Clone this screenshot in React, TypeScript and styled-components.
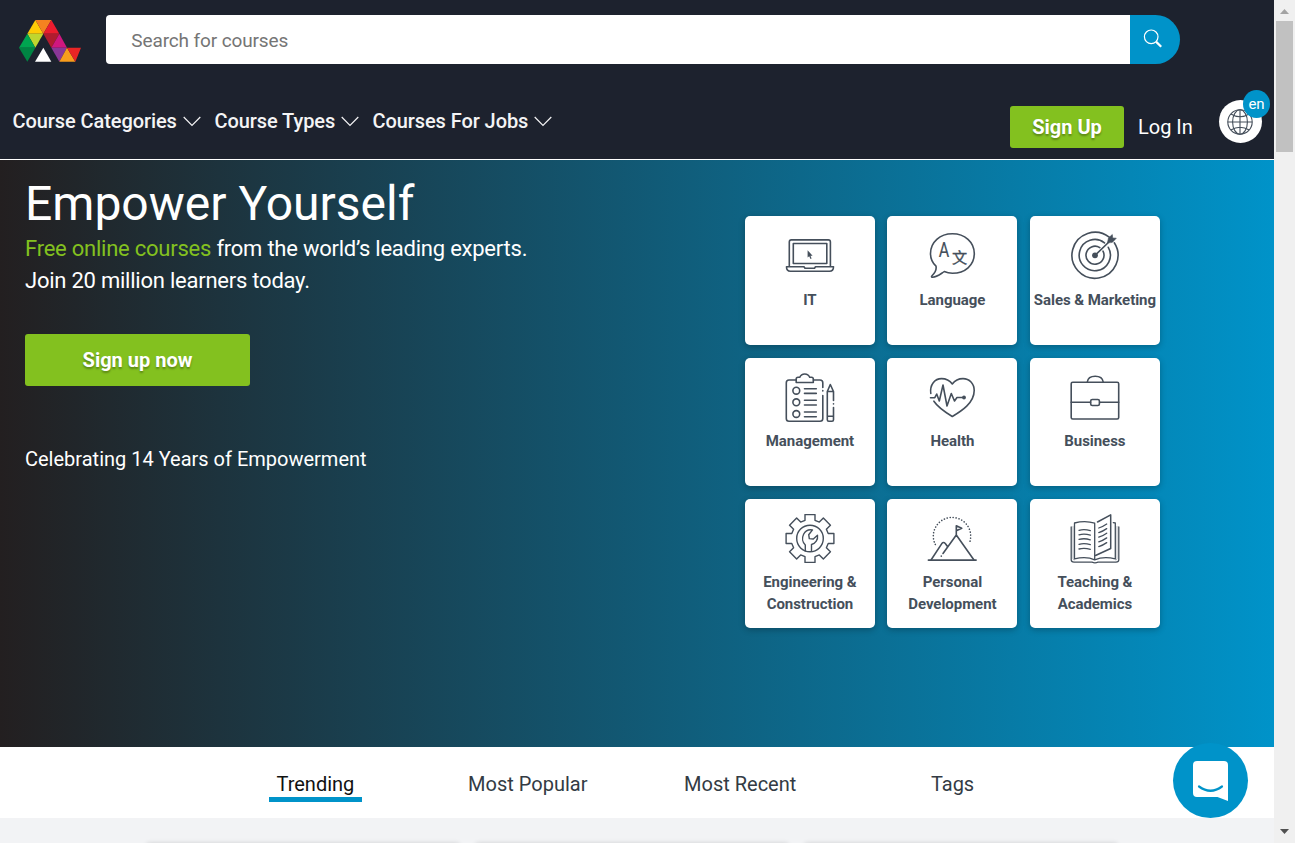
import React from "react";
import styled, { createGlobalStyle } from "styled-components";

const GlobalStyle = createGlobalStyle`
  * { box-sizing: border-box; }
  html, body { margin: 0; height: 100%; overflow: hidden; }
  body { font-family: Roboto, "Liberation Sans", sans-serif; background: #fff; }
  button, input { font-family: inherit; border: 0; padding: 0; margin: 0; }
  a { color: inherit; text-decoration: none; }
  h1, p { margin: 0; font-weight: 400; }
`;

const Window = styled.div`
  display: grid;
  grid-template-columns: 1274px 21px;
  width: 1295px;
  height: 843px;
  overflow: hidden;
`;

const Page = styled.div`
  position: relative;
  height: 843px;
  overflow: hidden;
  background: #f2f3f5;
`;

/* Header */

const Header = styled.header`
  height: 160px;
  background: #1d222e;
  border-bottom: 1px solid #fff;
`;

const SearchRow = styled.div`
  display: flex;
  align-items: flex-start;
  height: 90px;
  padding: 15px 0 0 19px;
`;

const LogoLink = styled.a`
  display: block;
  width: 87px;
  padding-top: 5px;
  svg { display: block; }
`;

const SearchForm = styled.form`
  display: flex;
  width: 1074px;
  height: 49px;
`;

const SearchInput = styled.input`
  flex: 1;
  min-width: 0;
  padding: 2px 25px 0 25.3px;
  border-radius: 4px 0 0 4px;
  background: #fff;
  font-size: 19px;
  letter-spacing: -0.12px;
  color: #333;
  outline: 0;
  &::placeholder { color: #757575; opacity: 1; }
`;

const SearchButton = styled.button`
  display: flex;
  justify-content: flex-start;
  padding: 14px 0 0 13px;
  width: 50px;
  border-radius: 0 25px 25px 0;
  background: #0093c9;
`;

const NavRow = styled.div`
  display: flex;
  justify-content: space-between;
  height: 69px;
  padding: 0 12px 0 12.5px;
`;

const Menu = styled.nav`
  display: flex;
  height: 62px;
  align-items: center;
`;

const MenuItem = styled.a<{ $w: number }>`
  display: flex;
  align-items: center;
  width: ${(p) => p.$w}px;
  font-size: 20px;
  font-weight: 500;
  letter-spacing: -0.08px;
  color: #f4f4f5;
  white-space: nowrap;
  svg { margin: 1px 0 0 6.2px; flex: none; }
`;

const Account = styled.div`
  display: flex;
  align-items: flex-start;
`;

const GreenButton = styled.button<{ $w: number; $h: number }>`
  width: ${(p) => p.$w}px;
  height: ${(p) => p.$h}px;
  border-radius: 3px;
  background: #83c11f;
  color: #fff;
  font-size: 20px;
  font-weight: 700;
  text-shadow: 0 2px 2px rgba(0, 0, 0, 0.3);
`;

const SignUp = styled(GreenButton)`
  margin-top: 16px;
`;

const LogIn = styled.a`
  margin: 16px 0 0 14px;
  width: 81px;
  line-height: 42px;
  font-size: 20px;
  color: #fff;
`;

const Language = styled.div`
  position: relative;
  display: flex;
  align-items: center;
  justify-content: center;
  width: 43px;
  height: 43px;
  margin: 10px 0 0;
  border-radius: 50%;
  background: #fff;
  svg { margin-right: 1px; }
`;

const LanguageCode = styled.span`
  position: absolute;
  top: -10px;
  left: 24px;
  width: 27px;
  height: 28px;
  border-radius: 50%;
  background: #0093c9;
  color: #fff;
  font-size: 15px;
  line-height: 28px;
  text-align: center;
`;

/* Hero */

const Hero = styled.section`
  display: flex;
  justify-content: space-between;
  height: 587px;
  padding: 0 114.1px 0 25px;
  background: linear-gradient(90deg, #231f20 0%, #0093c9 100%);
`;

const Pitch = styled.div`
  padding-top: 15px;
  color: #fff;
`;

const Title = styled.h1`
  font-size: 48px;
  line-height: 58px;
`;

const Lead = styled.p`
  font-size: 22px;
  line-height: 32px;
  letter-spacing: -0.235px;
  white-space: nowrap;
`;

const Accent = styled.span`
  color: #83c11f;
`;

const SignUpNow = styled(GreenButton)`
  display: block;
  margin-top: 37px;
`;

const Celebrate = styled.p`
  margin-top: 61px;
  font-size: 20px;
  line-height: 24px;
`;

const Categories = styled.div`
  display: grid;
  grid-template-columns: repeat(3, 130px);
  grid-auto-rows: 128.85px;
  gap: 12.4px 12.5px;
  height: max-content;
  margin-top: 56.4px;
`;

const Card = styled.a`
  display: flex;
  flex-direction: column;
  align-items: center;
  padding-top: 15px;
  border-radius: 5px;
  background: #fff;
  box-shadow: 0 2px 6px rgba(0, 0, 0, 0.25);
  svg { display: block; flex: none; }
`;

const CardLabel = styled.span`
  margin-top: 7.2px;
  width: 128px;
  font-size: 15px;
  font-weight: 700;
  letter-spacing: -0.05px;
  line-height: 22px;
  color: #454f5b;
  text-align: center;
  white-space: pre-line;
`;

/* Tabs */

const Tabs = styled.nav`
  display: grid;
  grid-template-columns: repeat(4, 212.4px);
  justify-items: center;
  align-items: start;
  height: 71px;
  padding: 22px 0 0 209.2px;
  background: #fff;
`;

const Tab = styled.a<{ $active?: boolean }>`
  padding: 0 7.7px;
  height: 33px;
  line-height: 30px;
  font-size: 20px;
  color: ${(p) => (p.$active ? "#111" : "#333b44")};
  border-bottom: 5px solid ${(p) => (p.$active ? "#0093c9" : "transparent")};
`;

const Courses = styled.div`
  display: grid;
  grid-template-columns: repeat(3, 314px);
  gap: 15px;
  padding: 25px 0 0 146px;
`;

const Course = styled.article`
  height: 200px;
  border-radius: 4px;
  background: #fff;
  box-shadow: 0 0 5px rgba(0, 0, 0, 0.14);
`;

const Chat = styled.button`
  position: absolute;
  left: 1173px;
  top: 743px;
  width: 75px;
  height: 75px;
  border-radius: 50%;
  background: #0093c9;
  svg { display: block; margin: 0 auto; }
`;

/* Scrollbar */

const Scrollbar = styled.div`
  display: flex;
  flex-direction: column;
  align-items: center;
  justify-content: space-between;
  background: #f0f0f0;
`;

const Thumb = styled.div`
  width: 17px;
  height: 131px;
  margin-bottom: auto;
  background: #c1c1c1;
`;

const Arrow = styled.div<{ $down?: boolean }>`
  display: flex;
  align-items: center;
  justify-content: center;
  height: 21px;
  padding-top: 2px;
  color: ${(p) => (p.$down ? "#505050" : "#a3a3a3")};
  transform: ${(p) => (p.$down ? "rotate(180deg)" : "none")};
`;

const logoTriangles: [string, string][] = [
  ["106,60 82,101 130,101", "#ffcb05"],
  ["106,60 154,60 130,101", "#f58220"],
  ["154,60 130,101 178,101", "#ec1c2e"],
  ["82,101 130,101 106,143", "#bfd62f"],
  ["82,101 57,143 106,143", "#00a550"],
  ["57,143 106,143 82,185", "#008443"],
  ["130,101 178,101 154,143", "#b01c2e"],
  ["178,101 154,143 201,143", "#d0177f"],
  ["154,143 201,143 178,185", "#8a3797"],
  ["201,143 178,185 226,185", "#f99d1c"],
  ["201,143 243,143 226,185", "#e92525"],
  ["130,143 105,185 154,185", "#ffffff"],
];

const Logo = () => (
  <svg width="62" height="42" viewBox="57 60 186 126">
    {logoTriangles.map(([points, fill]) => (
      <polygon key={points} points={points} fill={fill} />
    ))}
  </svg>
);

const Chevron = () => (
  <svg width="18" height="11" viewBox="0 0 18 11" fill="none" stroke="#f4f4f5" strokeWidth="1.2">
    <path d="M.7 1L9 9.3L17.3 1" />
  </svg>
);

const SearchIcon = () => (
  <svg width="21" height="21" viewBox="0 0 21 21" fill="none" stroke="#fff">
    <circle cx="8.2" cy="7.8" r="6.8" strokeWidth="1.2" />
    <path d="M13 12.6L18.2 17.8" strokeWidth="2.2" />
  </svg>
);

const Globe = () => (
  <svg width="26" height="26" viewBox="0 0 26 26" fill="none" stroke="#454f5b" strokeWidth="1.1">
    <circle cx="13" cy="13" r="12.2" />
    <ellipse cx="13" cy="13" rx="7.4" ry="12.2" />
    <path d="M13 .8V25.2M.8 13H25.2M3.8 5Q13 10.5 22.2 5M3.8 21Q13 15.5 22.2 21" />
  </svg>
);

const Glyph = ({ children }: { children: React.ReactNode }) => (
  <svg
    width="50"
    height="50"
    viewBox="0 0 50 50"
    fill="none"
    stroke="#454f5b"
    strokeWidth="1.6"
    strokeLinecap="round"
    strokeLinejoin="round"
  >
    {children}
  </svg>
);

const Laptop = () => (
  <Glyph>
    <path d="M4.3 35V11Q4.3 8.9 6.4 8.9H43.3Q45.4 8.9 45.4 11V35" />
    <rect x="8.3" y="12.5" width="33.5" height="20" />
    <path d="M1.5 35.7H19L20 37.2H29.5L30.5 35.7H48.5C48.5 38.5 47.5 40.3 44.5 40.3H5.5C2.5 40.3 1.5 38.5 1.5 35.7Z" />
    <path d="M22.6 19.3V26.6L24.2 25.2L25.5 28L26.6 27.5L25.5 24.7H27.6Z" fill="#454f5b" stroke="none" />
  </Glyph>
);

const Speech = () => (
  <Glyph>
    <path d="M9 35.2C5.3 31.7 3.5 27.5 3.5 22.6C3.5 11 13 2.7 25.4 2.7S47.3 11 47.3 22.6S38 42.3 25.4 42.3C22.5 42.3 19.7 41.7 17.2 40.6C14 42.5 10 46.5 5.2 46.2C4.3 46.1 4.4 45.3 5 44.7C7.8 42 9.8 39 9 35.2Z" />
    <g fill="#454f5b" textAnchor="middle">
      <text x="17" y="26.2" fontFamily="Roboto, sans-serif" fontSize="19.5" strokeWidth=".2" textLength="10.5" lengthAdjust="spacingAndGlyphs">A</text>
      <text x="32.7" y="32.2" fontFamily="'Noto Sans CJK SC', sans-serif" fontSize="15.2" strokeWidth=".3">文</text>
    </g>
  </Glyph>
);

const Target = () => (
  <Glyph>
    <path d="M39.2 6.2A23 23 0 1 0 44.3 11.8" />
    <path d="M34.5 11.9A15.6 15.6 0 1 0 38.3 16.3" />
    <path d="M29.8 16.6A9 9 0 1 0 33 20.1" />
    <circle cx="25" cy="24.3" r="2.9" fill="#454f5b" stroke="none" />
    <path d="M25 24.3L41 9" />
    <path d="M37.5 11.5L38.5 7L42.3 3.5L42.7 7L46.3 7.2L42.5 11.2Z" fill="#454f5b" strokeWidth=".6" />
  </Glyph>
);

const Clipboard = () => (
  <Glyph>
    <path d="M11 7H4Q1.3 7 1.3 9.7V45.5Q1.3 48.3 4 48.3H35Q37.8 48.3 37.8 45.5V22.5M37.8 18V17.5M37.8 14.5V9.7Q37.8 7 35 7H28.5" />
    <path d="M11.2 9.5V6Q11.2 4.3 13 4.3H14.8C15.6 2.3 17.3 1 19.7 1S23.9 2.3 24.7 4.3H26.5Q28.3 4.3 28.3 6V9.5Z" />
    {[17.7, 29.3, 41].map((y) => (
      <React.Fragment key={y}>
        <circle cx="11.3" cy={y} r="3.4" />
        <path d={`M19.5 ${y - 2}H31.3M19.5 ${y + 2.7}H31.3`} />
      </React.Fragment>
    ))}
    <path d="M48.5 27.5V18.5L45.3 11.5L42.3 18.5V46.7Q42.3 48.3 43.8 48.3H47Q48.5 48.3 48.5 46.7V34.5M48.5 30.8V31M42.3 18.5H48.5M42.3 43.3H48.5" />
  </Glyph>
);

const Heart = () => (
  <Glyph>
    <path d="M3.8 20.5C2.5 11.5 8 5.6 14.5 5.6C19.5 5.6 22.8 7.6 25.3 11C27.8 7.6 31.3 5.6 36 5.6C42.5 5.6 47.2 10.6 47.2 17.5C47.2 30 34.5 38 25.3 43.5C18 39 11 34.5 6.9 28.2" />
    <path d="M3.5 24.7H7.8L9.7 21L12.3 28L16 12L20 33L24.3 20.5L27.5 28L30 24.5H36" />
    <circle cx="37" cy="24.5" r="1.9" fill="#454f5b" stroke="none" />
  </Glyph>
);

const Briefcase = () => (
  <Glyph>
    <rect x="1.2" y="9.2" width="47.5" height="36.8" rx="1.5" />
    <path d="M17.3 9C17.8 5.3 20.5 3.2 25.2 3.2S32.7 5.3 33.2 9M1.2 29.3H20.5M29.7 29.3H48.7" />
    <rect x="20.7" y="26.5" width="8.7" height="6" rx="1.6" />
  </Glyph>
);

const gearPath =
  Array.from({ length: 8 }, (_, k) => {
    const a = (k * Math.PI) / 4;
    return [[-5, -18.2], [-5, -23.9], [5, -23.9], [5, -18.2]]
      .map(([x, y]) => `${(25 + x * Math.cos(a) - y * Math.sin(a)).toFixed(2)} ${(24.5 + x * Math.sin(a) + y * Math.cos(a)).toFixed(2)}`)
      .join("L");
  }).reduce((d, part) => d + (d ? "L" : "M") + part, "") + "Z";

const Gear = () => (
  <Glyph>
    <g strokeWidth="1.4">
      <path d={gearPath} />
      <circle cx="25" cy="24.5" r="13.3" />
      <path d="M20.3 37V31C17.5 28.5 16.8 24 18.6 20.3C20.4 16.8 23.8 15.2 27.5 15.9L23.7 20.7L24.3 24.6L28.3 25L32.5 21.3C33.2 25.5 30.5 29.5 26.5 30.5V37" />
    </g>
  </Glyph>
);

const Mountain = () => (
  <Glyph>
    <path d="M8.3 30.5A18.7 18.7 0 1 1 42.3 29.3" strokeDasharray=".1 2.9" strokeWidth="1.6" />
    <path d="M1.5 46.1H49" strokeWidth="1.9" />
    <path d="M4.2 45.7L14.8 29.6Q16.5 27.6 18.3 29.5L20.3 32.2M16 39.5L29.3 21L46.8 45.7M29.3 21V11.8L34.7 14.3L29.3 16.8M14.3 42V42.2" />
  </Glyph>
);

const Book = () => (
  <Glyph>
    <g strokeWidth="1.3">
      <path d="M1.2 13V45.8Q1.2 48.2 4 48.2H22C23.5 48.9 26.5 48.9 28 48.2H46Q48.8 48.2 48.8 45.8V13" />
      <path d="M3 12.5V44.5Q3 46.2 4.5 46M47 12.5V44.5Q47 46.2 45.5 46" strokeWidth=".4" />
      <path d="M24.7 45.8V9.2C18.5 7.2 11.5 7.2 4.5 9V44.8C12 43.2 19 43.2 24.7 45.8C31 43.2 38 43.2 45.3 44.8V9L43.3 8.6" />
      <path d="M27.5 8L40.7 .9V34.5L25.5 41.5" strokeWidth="1.5" />
      {[16.3, 20.8, 25.4, 30.3, 35].map((y) => (
        <path key={y} d={`M9 ${y}Q14.5 ${y - 1.5} 20.3 ${y + 0.4}`} />
      ))}
      {[14, 18.6, 23.2, 27.9, 32.6].map((y) => (
        <path key={y} d={`M28.8 ${y}Q33 ${y - 1.4} 36.7 ${y - 4}`} />
      ))}
    </g>
  </Glyph>
);

const ChatIcon = () => (
  <svg width="35" height="40" viewBox="0 0 35 40">
    <path d="M4 0H31Q35 0 35 4V40L24.5 36H4Q0 36 0 32V4Q0 0 4 0Z" fill="#fff" />
    <path d="M6 25.5Q17.5 34 29 25.5" fill="none" stroke="#0093c9" strokeWidth="2.2" strokeLinecap="round" />
  </svg>
);

const Caret = () => (
  <svg width="9" height="5" viewBox="0 0 9 5">
    <path d="M0 5L4.5 0L9 5Z" fill="currentColor" />
  </svg>
);

const menu = [
  { label: "Course Categories", width: 202 },
  { label: "Course Types", width: 158 },
  { label: "Courses For Jobs", width: 190 },
];

const categories = [
  { label: "IT", Icon: Laptop },
  { label: "Language", Icon: Speech },
  { label: "Sales & Marketing", Icon: Target },
  { label: "Management", Icon: Clipboard },
  { label: "Health", Icon: Heart },
  { label: "Business", Icon: Briefcase },
  { label: "Engineering &\nConstruction", Icon: Gear },
  { label: "Personal\nDevelopment", Icon: Mountain },
  { label: "Teaching &\nAcademics", Icon: Book },
];

const tabs = ["Trending", "Most Popular", "Most Recent", "Tags"];

export default function App() {
  return (
    <Window>
      <GlobalStyle />
      <Page>
        <Header>
          <SearchRow>
            <LogoLink href="#"><Logo /></LogoLink>
            <SearchForm>
              <SearchInput placeholder="Search for courses" />
              <SearchButton type="button" aria-label="Search"><SearchIcon /></SearchButton>
            </SearchForm>
          </SearchRow>
          <NavRow>
            <Menu>
              {menu.map((m) => (
                <MenuItem key={m.label} href="#" $w={m.width}>{m.label}<Chevron /></MenuItem>
              ))}
            </Menu>
            <Account>
              <SignUp $w={114} $h={42}>Sign Up</SignUp>
              <LogIn href="#">Log In</LogIn>
              <Language><Globe /><LanguageCode>en</LanguageCode></Language>
            </Account>
          </NavRow>
        </Header>
        <Hero>
          <Pitch>
            <Title>Empower Yourself</Title>
            <Lead><Accent>Free online courses</Accent> from the world’s leading experts.<br />Join 20 million learners today.</Lead>
            <SignUpNow $w={225} $h={52}>Sign up now</SignUpNow>
            <Celebrate>Celebrating 14 Years of Empowerment</Celebrate>
          </Pitch>
          <Categories>
            {categories.map(({ label, Icon }) => (
              <Card key={label} href="#"><Icon /><CardLabel>{label}</CardLabel></Card>
            ))}
          </Categories>
        </Hero>
        <Tabs>
          {tabs.map((t, i) => (
            <Tab key={t} href="#" $active={i === 0}>{t}</Tab>
          ))}
        </Tabs>
        <Courses><Course /><Course /><Course /></Courses>
        <Chat aria-label="Chat"><ChatIcon /></Chat>
      </Page>
      <Scrollbar>
        <Arrow><Caret /></Arrow>
        <Thumb />
        <Arrow $down><Caret /></Arrow>
      </Scrollbar>
    </Window>
  );
}
